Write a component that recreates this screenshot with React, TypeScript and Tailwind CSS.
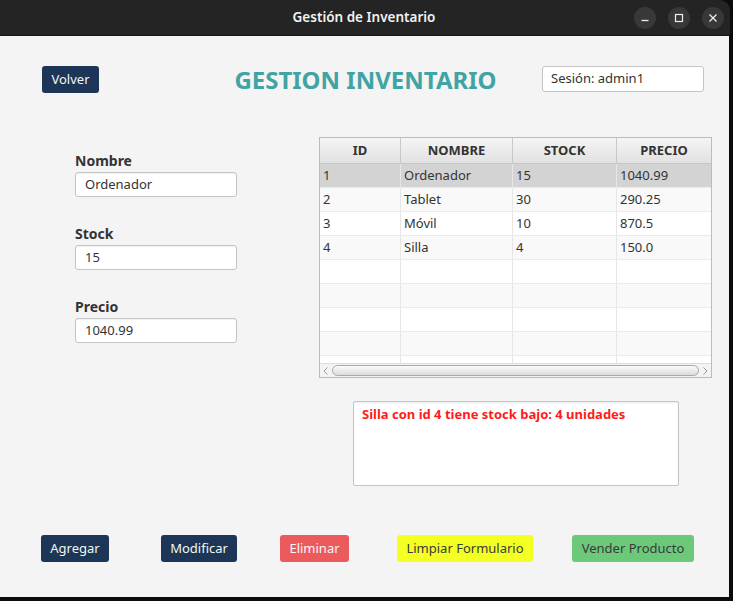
import React from 'react';

type Producto = { id: number; nombre: string; stock: number; precio: string };

const productos: Producto[] = [
  { id: 1, nombre: 'Ordenador', stock: 15, precio: '1040.99' },
  { id: 2, nombre: 'Tablet', stock: 30, precio: '290.25' },
  { id: 3, nombre: 'Móvil', stock: 10, precio: '870.5' },
  { id: 4, nombre: 'Silla', stock: 4, precio: '150.0' },
];

const TitleBar: React.FC = () => (
  <div className="relative h-[36px] w-[730px] rounded-tr-[10px] bg-[#242424] border-b border-[#161616] flex items-center justify-center">
    <span className="font-['Noto_Sans',sans-serif] font-semibold text-[13.5px] text-[#f2f2f2] ml-[-2px]">
      Gestión de Inventario
    </span>
    {/* window controls */}
    <div className="absolute right-[6px] top-[7px] flex gap-[12px]">
      <div className="w-[22px] h-[22px] rounded-full bg-[#383838] flex items-center justify-center">
        <svg width="10" height="10" viewBox="0 0 10 10">
          <path d="M1.5 7.5h7" stroke="#eeeeee" strokeWidth="1.3" />
        </svg>
      </div>
      <div className="w-[22px] h-[22px] rounded-full bg-[#383838] flex items-center justify-center">
        <svg width="10" height="10" viewBox="0 0 10 10">
          <rect x="1.5" y="1.5" width="7" height="7" fill="none" stroke="#eeeeee" strokeWidth="1.2" />
        </svg>
      </div>
      <div className="w-[22px] h-[22px] rounded-full bg-[#383838] flex items-center justify-center">
        <svg width="10" height="10" viewBox="0 0 10 10">
          <path d="M1.5 1.5l7 7M8.5 1.5l-7 7" stroke="#eeeeee" strokeWidth="1.3" />
        </svg>
      </div>
    </div>
  </div>
);

const Campo: React.FC<{ label: string; value: string }> = ({ label, value }) => (
  <div className="flex flex-col">
    <label className="text-[14px] leading-[20px] font-bold text-[#333333]">{label}</label>
    <div className="mt-[1px] h-[25px] w-[162px] bg-white border border-[#c4c4c4] rounded-[3px] shadow-[inset_0_1px_1px_rgba(0,0,0,0.06)] flex items-center pl-[9px] text-[13px] text-[#333333]">
      {value}
    </div>
  </div>
);

const Tabla: React.FC = () => {
  const filas = [...productos, null, null, null, null, null];
  return (
    <div className="w-[393px] h-[241px] border border-[#bcbcbc] bg-white flex flex-col">
      {/* header */}
      <div className="grid grid-cols-[81px_112px_104px_94px] h-[26px] border-b border-[#c6c6c6] bg-gradient-to-b from-[#f5f5f5] to-[#e1e1e1]">
        {['ID', 'NOMBRE', 'STOCK', 'PRECIO'].map((h, i) => (
          <div
            key={h}
            className={`flex items-center justify-center text-[13px] font-bold text-[#333333] ${i < 3 ? 'border-r border-[#c8c8c8]' : ''}`}
          >
            {h}
          </div>
        ))}
      </div>
      {/* body */}
      <div className="h-[199px] overflow-hidden">
        {filas.map((p, idx) => {
          const bg = idx === 0 ? 'bg-[#d3d3d3]' : idx % 2 === 1 ? 'bg-[#f9f9f9]' : 'bg-white';
          const cells = p ? [String(p.id), p.nombre, String(p.stock), p.precio] : ['', '', '', ''];
          return (
            <div key={idx} className={`grid grid-cols-[81px_112px_104px_94px] h-[24px] border-b border-[#ebebeb] ${bg}`}>
              {cells.map((c, i) => (
                <div
                  key={i}
                  className={`flex items-center pl-[3px] text-[13px] text-[#333333] ${i < 3 ? 'border-r border-[#e6e6e6]' : ''}`}
                >
                  {c}
                </div>
              ))}
            </div>
          );
        })}
      </div>
      {/* horizontal scrollbar */}
      <div className="h-[14px] bg-[#f3f3f3] border-t border-[#dedede] flex items-center">
        <div className="w-[12px] flex justify-center">
          <svg width="6" height="8" viewBox="0 0 6 8">
            <path d="M4.5 0.5L1 4l3.5 3.5" fill="none" stroke="#9a9a9a" strokeWidth="1" />
          </svg>
        </div>
        <div className="flex-1 h-[11px] rounded-full border border-[#a9a9a9] bg-gradient-to-b from-[#fbfbfb] to-[#dcdcdc]" />
        <div className="w-[12px] flex justify-center">
          <svg width="6" height="8" viewBox="0 0 6 8">
            <path d="M1.5 0.5L5 4 1.5 7.5" fill="none" stroke="#9a9a9a" strokeWidth="1" />
          </svg>
        </div>
      </div>
    </div>
  );
};

const Boton: React.FC<{ texto: string; className: string }> = ({ texto, className }) => (
  <button className={`h-[27px] rounded-[3px] flex items-center justify-center text-[13px] ${className}`}>
    {texto}
  </button>
);

export default function App() {
  return (
    <div className="w-[733px] h-[601px] bg-[#0b0b0b] overflow-hidden font-['Noto_Sans',sans-serif]">
      <TitleBar />
      <div className="w-[729px] h-[561px] bg-[#f4f4f4] flex flex-col">
        {/* header */}
        <div className="flex items-start mt-[30px] pl-[42px]">
          <Boton texto="Volver" className="w-[57px] bg-[#1d3557] text-[#f1faee]" />
          <div className="ml-[90px] w-[353px] text-center text-[24px] leading-[21px] font-bold text-[#41a4a4] pt-[3px]">
            GESTION INVENTARIO
          </div>
          <div className="w-[162px] h-[26px] bg-white border border-[#c4c4c4] rounded-[3px] flex items-center pl-[8px] text-[13px] text-[#333333]">
            Sesión: admin1
          </div>
        </div>

        {/* form + table */}
        <div className="flex items-start mt-[44px]">
          <div className="ml-[75px] mt-[14px] flex flex-col gap-[27px]">
            <Campo label="Nombre" value="Ordenador" />
            <Campo label="Stock" value="15" />
            <Campo label="Precio" value="1040.99" />
          </div>
          <div className="ml-[82px]">
            <Tabla />
          </div>
        </div>

        {/* mensajes */}
        <div className="ml-[353px] mt-[23px] w-[326px] h-[85px] bg-white border border-[#c4c4c4] rounded-[2px] shadow-[inset_0_1px_2px_rgba(0,0,0,0.08)] px-[8px] pt-[3px]">
          <p className="text-[13px] font-bold text-[#ff1a1a]">Silla con id 4 tiene stock bajo: 4 unidades</p>
        </div>

        {/* acciones */}
        <div className="flex mt-[49px] pl-[41px]">
          <Boton texto="Agregar" className="w-[68px] bg-[#1d3557] text-[#f1faee]" />
          <Boton texto="Modificar" className="ml-[52px] w-[76px] bg-[#1d3557] text-[#f1faee]" />
          <Boton texto="Eliminar" className="ml-[43px] w-[69px] bg-[#eb5a5c] text-[#f7f7f7]" />
          <Boton texto="Limpiar Formulario" className="ml-[48px] w-[136px] bg-[#f4ff22] text-[#3a3a3a]" />
          <Boton texto="Vender Producto" className="ml-[39px] w-[122px] bg-[#6cc97a] text-[#3a3a3a]" />
        </div>
      </div>
    </div>
  );
}
